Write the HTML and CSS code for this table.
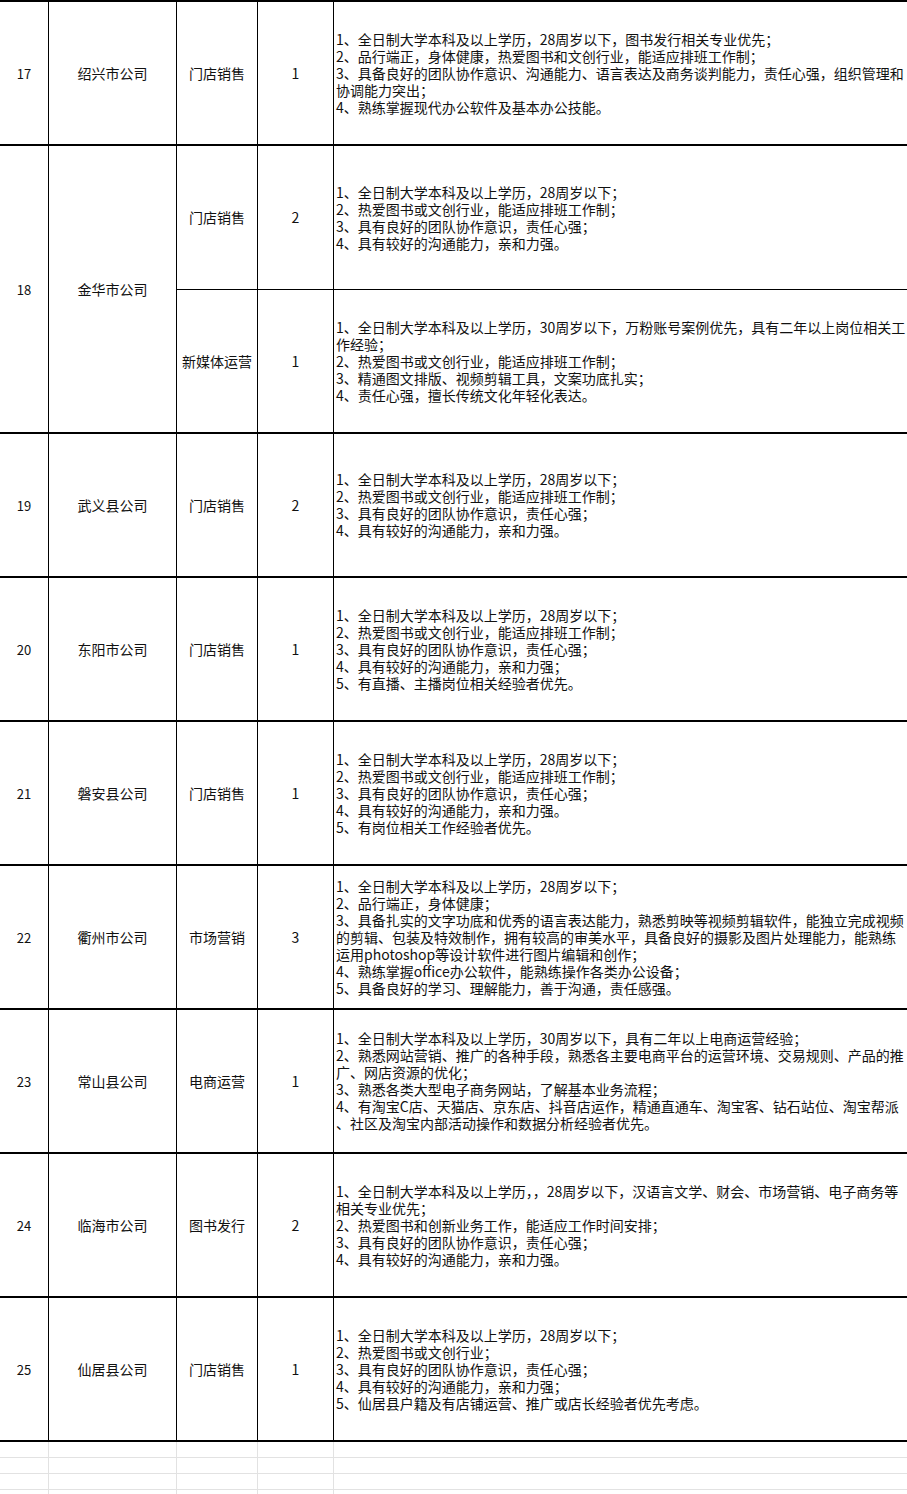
FILE: index.html
```html
<!DOCTYPE html>
<html lang="zh-CN">
<head>
<meta charset="utf-8">
<title>招聘岗位</title>
<link rel="stylesheet" href="styles.css">
</head>
<body>
<div class="sheet">
  <div class="grid">
    <div class="c num">17</div>
    <div class="c">绍兴市公司</div>
    <div class="c">门店销售</div>
    <div class="c">1</div>
    <div class="c req"><div class="txt">
      <div class="ln">1、全日制大学本科及以上学历，28周岁以下，图书发行相关专业优先；</div>
      <div class="ln">2、品行端正，身体健康，热爱图书和文创行业，能适应排班工作制；</div>
      <div class="ln">3、具备良好的团队协作意识、沟通能力、语言表达及商务谈判能力，责任心强，组织管理和</div>
      <div class="ln">协调能力突出；</div>
      <div class="ln">4、熟练掌握现代办公软件及基本办公技能。</div>
    </div></div>

    <div class="c num span2">18</div>
    <div class="c span2">金华市公司</div>
    <div class="c thin">门店销售</div>
    <div class="c thin">2</div>
    <div class="c req thin"><div class="txt">
      <div class="ln">1、全日制大学本科及以上学历，28周岁以下；</div>
      <div class="ln">2、热爱图书或文创行业，能适应排班工作制；</div>
      <div class="ln">3、具有良好的团队协作意识，责任心强；</div>
      <div class="ln">4、具有较好的沟通能力，亲和力强。</div>
    </div></div>
    <div class="c">新媒体运营</div>
    <div class="c">1</div>
    <div class="c req"><div class="txt">
      <div class="ln">1、全日制大学本科及以上学历，30周岁以下，万粉账号案例优先，具有二年以上岗位相关工</div>
      <div class="ln">作经验；</div>
      <div class="ln">2、热爱图书或文创行业，能适应排班工作制；</div>
      <div class="ln">3、精通图文排版、视频剪辑工具，文案功底扎实；</div>
      <div class="ln">4、责任心强，擅长传统文化年轻化表达。</div>
    </div></div>

    <div class="c num">19</div>
    <div class="c">武义县公司</div>
    <div class="c">门店销售</div>
    <div class="c">2</div>
    <div class="c req"><div class="txt">
      <div class="ln">1、全日制大学本科及以上学历，28周岁以下；</div>
      <div class="ln">2、热爱图书或文创行业，能适应排班工作制；</div>
      <div class="ln">3、具有良好的团队协作意识，责任心强；</div>
      <div class="ln">4、具有较好的沟通能力，亲和力强。</div>
    </div></div>

    <div class="c num">20</div>
    <div class="c">东阳市公司</div>
    <div class="c">门店销售</div>
    <div class="c">1</div>
    <div class="c req"><div class="txt">
      <div class="ln">1、全日制大学本科及以上学历，28周岁以下；</div>
      <div class="ln">2、热爱图书或文创行业，能适应排班工作制；</div>
      <div class="ln">3、具有良好的团队协作意识，责任心强；</div>
      <div class="ln">4、具有较好的沟通能力，亲和力强；</div>
      <div class="ln">5、有直播、主播岗位相关经验者优先。</div>
    </div></div>

    <div class="c num">21</div>
    <div class="c">磐安县公司</div>
    <div class="c">门店销售</div>
    <div class="c">1</div>
    <div class="c req"><div class="txt">
      <div class="ln">1、全日制大学本科及以上学历，28周岁以下；</div>
      <div class="ln">2、热爱图书或文创行业，能适应排班工作制；</div>
      <div class="ln">3、具有良好的团队协作意识，责任心强；</div>
      <div class="ln">4、具有较好的沟通能力，亲和力强。</div>
      <div class="ln">5、有岗位相关工作经验者优先。</div>
    </div></div>

    <div class="c num">22</div>
    <div class="c">衢州市公司</div>
    <div class="c">市场营销</div>
    <div class="c">3</div>
    <div class="c req"><div class="txt">
      <div class="ln">1、全日制大学本科及以上学历，28周岁以下；</div>
      <div class="ln">2、品行端正，身体健康；</div>
      <div class="ln">3、具备扎实的文字功底和优秀的语言表达能力，熟悉剪映等视频剪辑软件，能独立完成视频</div>
      <div class="ln">的剪辑、包装及特效制作，拥有较高的审美水平，具备良好的摄影及图片处理能力，能熟练</div>
      <div class="ln">运用photoshop等设计软件进行图片编辑和创作；</div>
      <div class="ln">4、熟练掌握office办公软件，能熟练操作各类办公设备；</div>
      <div class="ln">5、具备良好的学习、理解能力，善于沟通，责任感强。</div>
    </div></div>

    <div class="c num">23</div>
    <div class="c">常山县公司</div>
    <div class="c">电商运营</div>
    <div class="c">1</div>
    <div class="c req"><div class="txt">
      <div class="ln">1、全日制大学本科及以上学历，30周岁以下，具有二年以上电商运营经验；</div>
      <div class="ln">2、熟悉网站营销、推广的各种手段，熟悉各主要电商平台的运营环境、交易规则、产品的推</div>
      <div class="ln">广、网店资源的优化；</div>
      <div class="ln">3、熟悉各类大型电子商务网站，了解基本业务流程；</div>
      <div class="ln">4、有淘宝C店、天猫店、京东店、抖音店运作，精通直通车、淘宝客、钻石站位、淘宝帮派</div>
      <div class="ln">、社区及淘宝内部活动操作和数据分析经验者优先。</div>
    </div></div>

    <div class="c num">24</div>
    <div class="c">临海市公司</div>
    <div class="c">图书发行</div>
    <div class="c">2</div>
    <div class="c req"><div class="txt">
      <div class="ln">1、全日制大学本科及以上学历，，28周岁以下，汉语言文学、财会、市场营销、电子商务等</div>
      <div class="ln">相关专业优先；</div>
      <div class="ln">2、热爱图书和创新业务工作，能适应工作时间安排；</div>
      <div class="ln">3、具有良好的团队协作意识，责任心强；</div>
      <div class="ln">4、具有较好的沟通能力，亲和力强。</div>
    </div></div>

    <div class="c num">25</div>
    <div class="c">仙居县公司</div>
    <div class="c">门店销售</div>
    <div class="c">1</div>
    <div class="c req"><div class="txt">
      <div class="ln">1、全日制大学本科及以上学历，28周岁以下；</div>
      <div class="ln">2、热爱图书或文创行业；</div>
      <div class="ln">3、具有良好的团队协作意识，责任心强；</div>
      <div class="ln">4、具有较好的沟通能力，亲和力强；</div>
      <div class="ln">5、仙居县户籍及有店铺运营、推广或店长经验者优先考虑。</div>
    </div></div>
  </div>

  <div class="blank">
    <div class="b"></div><div class="b"></div><div class="b"></div><div class="b"></div><div class="b last"></div>
    <div class="b"></div><div class="b"></div><div class="b"></div><div class="b"></div><div class="b last"></div>
    <div class="b"></div><div class="b"></div><div class="b"></div><div class="b"></div><div class="b last"></div>
    <div class="b"></div><div class="b"></div><div class="b"></div><div class="b"></div><div class="b last"></div>
  </div>
</div>
</body>
</html>
```

FILE: styles.css
```css
* {
  box-sizing: border-box;
}

html, body {
  margin: 0;
  padding: 0;
  background: #ffffff;
}

body {
  font-family: "Noto Sans CJK SC", "DejaVu Sans", sans-serif;
  font-size: 14px;
  color: #111111;
  width: 907px;
  height: 1494px;
  overflow: hidden;
}

.sheet {
  width: 907px;
}

.grid {
  display: grid;
  grid-template-columns: 49px 128px 81px 76px 573px;
  grid-auto-rows: 144px;
  border-top: 2px solid #000000;
}

.c {
  display: flex;
  align-items: center;
  justify-content: center;
  border-right: 1px solid #000000;
  border-bottom: 2px solid #000000;
  line-height: 17px;
  white-space: nowrap;
}

.c.num {
  font-size: 13px;
}

.c.span2 {
  grid-row: span 2;
}

.c.thin {
  border-bottom-width: 1px;
}

.c.req {
  justify-content: flex-start;
  padding-left: 2px;
  border-right: none;
}

.txt {
  display: flex;
  flex-direction: column;
}

.ln {
  white-space: nowrap;
  line-height: 17px;
  height: 17px;
}

.blank {
  display: grid;
  grid-template-columns: 49px 128px 81px 76px 573px;
  grid-auto-rows: 16px;
}

.b {
  border-right: 1px solid #e2e2e2;
  border-bottom: 1px solid #e2e2e2;
}

.b.last {
  border-right: none;
}
```
